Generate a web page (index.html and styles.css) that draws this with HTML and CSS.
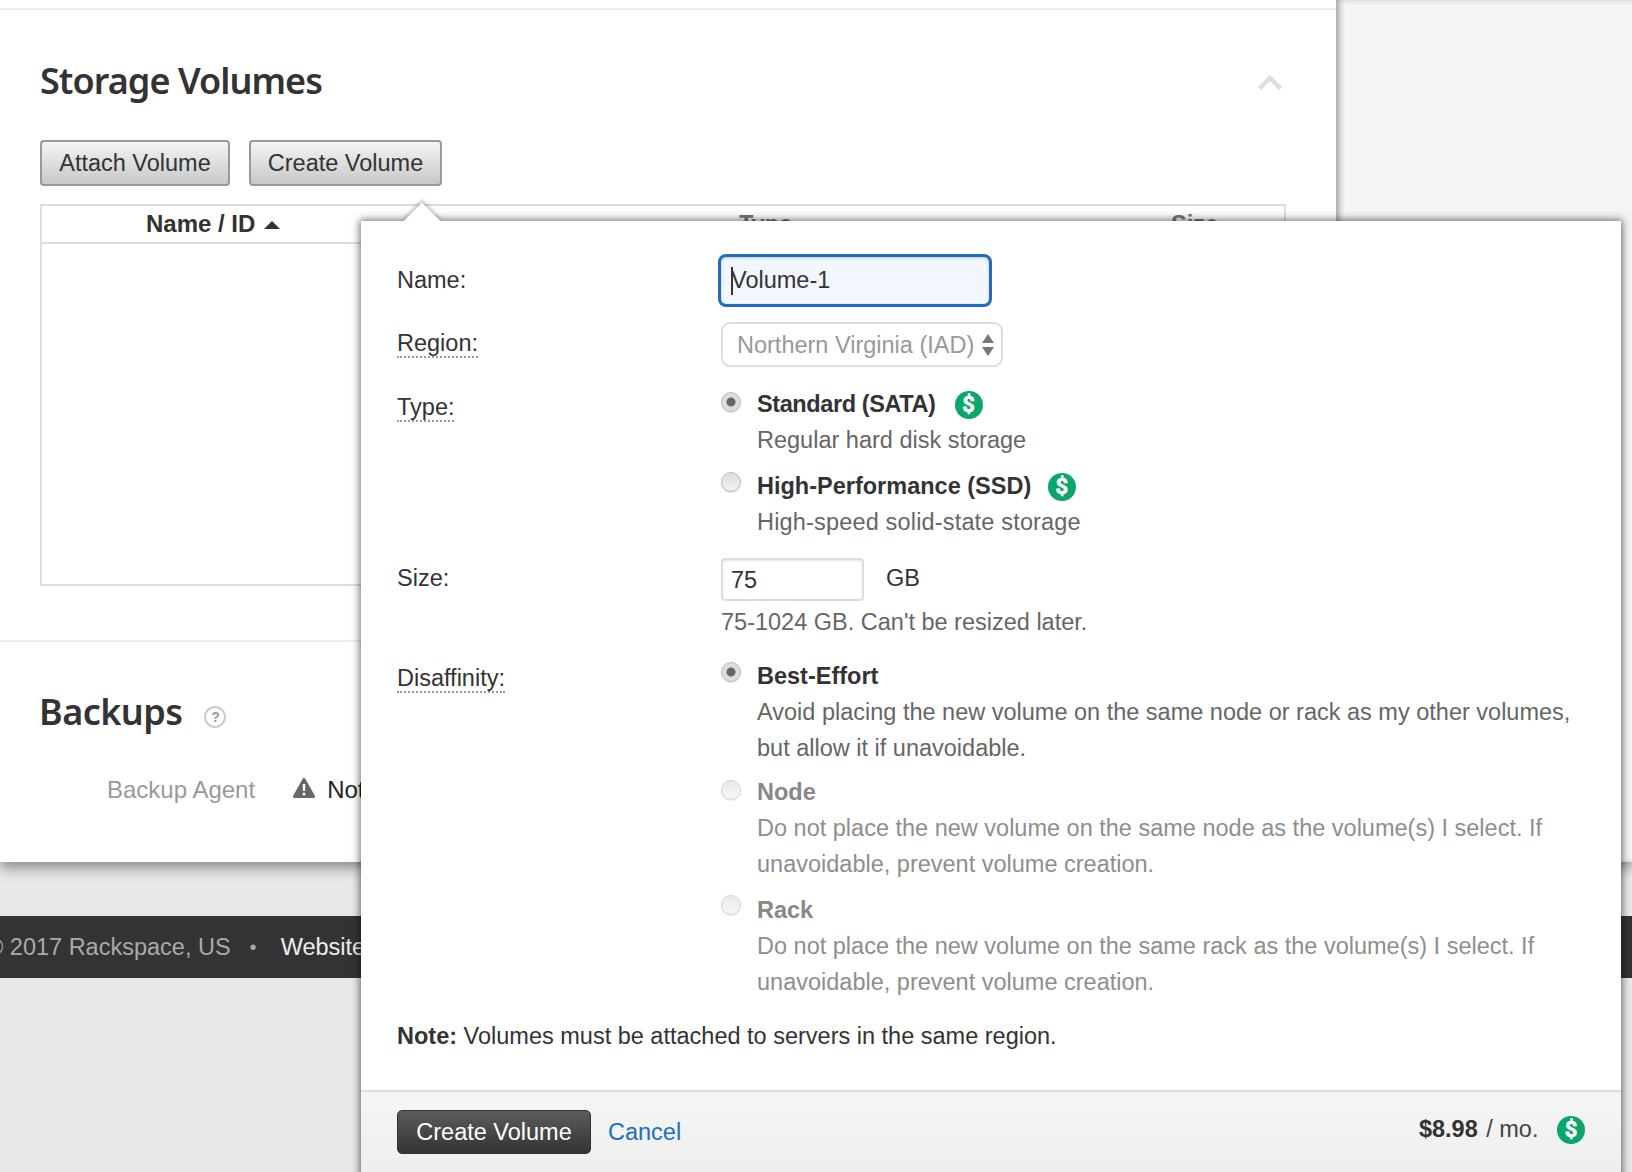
FILE: index.html
```html
<!DOCTYPE html>
<html lang="en">
<head>
  <meta charset="UTF-8" />
  <title>Storage Volumes</title>
  <link rel="stylesheet" href="styles.css">
</head>
<body>
  <div class="main">
    <div class="content">
      <section class="volumes">
        <div class="section-head">
          <h2>Storage Volumes</h2>
          <svg class="collapse" width="24" height="16" viewBox="0 0 24 16"><path d="M1.5 14.5 L12 4 L22.5 14.5" fill="none" stroke="#ddd" stroke-width="4.5"/></svg>
        </div>
        <div class="actions">
          <button class="btn">Attach Volume</button>
          <button class="btn">Create Volume</button>
        </div>
        <div class="table">
          <div class="table-head">
            <div class="col-name">Name / ID <span class="sort-up"></span></div>
            <div class="col-type">Type</div>
            <div class="col-size">Size</div>
          </div>
        </div>
      </section>
      <section class="backups">
        <div class="backups-head">
          <h2>Backups</h2>
          <span class="help">?</span>
        </div>
        <div class="agent">
          <span class="agent-label">Backup Agent</span>
          <svg class="warn" width="22" height="20" viewBox="0 0 22 20"><path d="M11 1.5 L20.5 18.5 L1.5 18.5 Z" fill="#666" stroke="#666" stroke-width="3" stroke-linejoin="round"/><rect x="9.8" y="6" width="2.4" height="7" fill="#fff"/><rect x="9.8" y="14.8" width="2.4" height="2.6" fill="#fff"/></svg>
          <span class="agent-value">Not Installed</span>
        </div>
      </section>
    </div>
    <div class="sidebar"></div>
  </div>

  <div class="site-footer">
    <span class="copyright">© 2017 Rackspace, US</span>
    <span class="dot">•</span>
    <span class="footer-link">Website</span>
  </div>

  <div class="popover">
    <div class="popover-arrow"></div>
    <div class="popover-body">
      <div class="row row-name">
        <div class="label">Name:</div>
        <div class="name-input"><span class="caret"></span>Volume-1</div>
      </div>
      <div class="row row-region">
        <div class="label"><span class="hint-label">Region:</span></div>
        <div class="select">
          <span>Northern Virginia (IAD)</span>
          <svg width="12" height="22" viewBox="0 0 12 22"><path d="M6 0 L12 9 L0 9 Z M0 13 L12 13 L6 22 Z" fill="#777"/></svg>
        </div>
      </div>
      <div class="row row-type">
        <div class="label"><span class="hint-label">Type:</span></div>
        <div class="options">
          <div class="option">
            <span class="radio radio-on"></span>
            <div>
              <div class="option-title">Standard (SATA) <span class="price-icon">$</span></div>
              <div class="option-desc">Regular hard disk storage</div>
            </div>
          </div>
          <div class="option">
            <span class="radio"></span>
            <div>
              <div class="option-title">High-Performance (SSD) <span class="price-icon">$</span></div>
              <div class="option-desc">High-speed solid-state storage</div>
            </div>
          </div>
        </div>
      </div>
      <div class="row row-size">
        <div class="label">Size:</div>
        <div>
          <div class="size-line">
            <div class="size-input">75</div>
            <span class="unit">GB</span>
          </div>
          <div class="size-hint">75-1024 GB. Can't be resized later.</div>
        </div>
      </div>
      <div class="row row-disaffinity">
        <div class="label"><span class="hint-label">Disaffinity:</span></div>
        <div class="options">
          <div class="option option-best">
            <span class="radio radio-on"></span>
            <div>
              <div class="option-title">Best-Effort</div>
              <div class="option-desc">Avoid placing the new volume on the same node or rack as my other volumes,<br>but allow it if unavoidable.</div>
            </div>
          </div>
          <div class="option disabled">
            <span class="radio"></span>
            <div>
              <div class="option-title">Node</div>
              <div class="option-desc">Do not place the new volume on the same node as the volume(s) I select. If<br>unavoidable, prevent volume creation.</div>
            </div>
          </div>
          <div class="option disabled">
            <span class="radio"></span>
            <div>
              <div class="option-title">Rack</div>
              <div class="option-desc">Do not place the new volume on the same rack as the volume(s) I select. If<br>unavoidable, prevent volume creation.</div>
            </div>
          </div>
        </div>
      </div>
      <p class="note"><strong>Note:</strong> Volumes must be attached to servers in the same region.</p>
    </div>
    <div class="popover-foot">
      <button class="btn-dark">Create Volume</button>
      <a class="cancel" href="#">Cancel</a>
      <div class="total"><strong>$8.98</strong> / mo. <span class="price-icon">$</span></div>
    </div>
  </div>
</body>
</html>
```

FILE: styles.css
```css
html, body {
  margin: 0;
  height: 1172px;
  overflow: hidden;
}
body {
  position: relative;
  font-family: "Liberation Sans", Arial, sans-serif;
  font-size: 23.5px;
  line-height: 36px;
  color: #333;
  background: #e8e8e8;
}
h2 {
  margin: 0 0 0 -1px;
  font-family: "Noto Sans", sans-serif;
  font-size: 36px;
  line-height: 48px;
  font-weight: 600;
  letter-spacing: -0.55px;
  color: #333;
}

/* Page behind the popover */
.main {
  display: flex;
  height: 862px;
  box-shadow: 0 6px 12px rgba(0,0,0,0.4);
}
.content {
  width: 1336px;
  background: #fff;
  padding-top: 8px;
  box-sizing: border-box;
}
.sidebar {
  flex: 1;
  background: #f4f4f4;
  box-shadow: inset 5px 0 6px -2px rgba(0,0,0,0.35);
}
.volumes {
  border-top: 2px solid #eee;
  border-bottom: 2px solid #eee;
  height: 634px;
  padding: 47px 50px 0 40px;
  box-sizing: border-box;
}
.volumes h2 {
  margin-left: 0;
  letter-spacing: -0.95px;
}
.section-head {
  display: flex;
  justify-content: space-between;
  align-items: center;
}
.collapse {
  margin: 2px 4px 0 0;
}
.actions {
  display: flex;
  gap: 19px;
  margin-top: 35px;
}
.btn {
  width: 190px;
  height: 46px;
  padding: 0;
  font: inherit;
  color: #333;
  border: 2px solid #999;
  border-radius: 4px;
  background: linear-gradient(#f4f4f4, #c8c8c8);
}
.btn + .btn {
  width: 193px;
}
.table {
  margin-top: 18px;
  height: 382px;
  border: 2px solid #ddd;
  box-sizing: border-box;
}
.table-head {
  display: flex;
  height: 36px;
  border-bottom: 2px solid #ddd;
  font-weight: 700;
  line-height: 36px;
}
.col-name {
  width: 400px;
  padding-left: 104px;
  box-sizing: border-box;
  font-size: 24px;
}
.col-type {
  margin-left: 297px;
  color: #777;
}
.col-size {
  margin-left: 379px;
  color: #777;
}
.sort-up {
  display: inline-block;
  margin: 0 0 3px 2px;
  border-left: 8px solid transparent;
  border-right: 8px solid transparent;
  border-bottom: 8px solid #333;
}
.backups {
  padding: 46px 40px 0;
}
.backups-head {
  display: flex;
  align-items: center;
  gap: 22px;
}
.help {
  width: 18px;
  height: 18px;
  margin-top: 10px;
  border: 2px solid #ccc;
  border-radius: 50%;
  font-size: 14px;
  line-height: 18px;
  font-weight: 700;
  text-align: center;
  color: #999;
}
.agent {
  display: flex;
  align-items: center;
  margin-top: 36px;
  padding-left: 67px;
  font-size: 24px;
}
.agent-label {
  color: #999;
}
.warn {
  margin: -4px 12px 0 38px;
}
.agent-value {
  color: #222;
  white-space: nowrap;
}
.site-footer {
  display: flex;
  align-items: center;
  height: 62px;
  margin-top: 54px;
  background: #333;
  color: #aaa;
  white-space: nowrap;
}
.copyright {
  margin-left: -14px;
}
.dot {
  margin: 0 24px 0 19px;
  font-size: 20px;
}
.footer-link {
  color: #eee;
}

/* Create volume popover */
.popover {
  position: absolute;
  left: 361px;
  top: 221px;
  width: 1260px;
  height: 960px;
  background: #fff;
  box-shadow: 0 0 8px 1px rgba(0,0,0,0.6);
}
.popover-arrow {
  position: absolute;
  left: 48px;
  top: -13px;
  width: 26px;
  height: 26px;
  background: #fff;
  transform: rotate(45deg);
  box-shadow: -2px -2px 4px rgba(0,0,0,0.25);
}
.popover-body {
  position: relative;
  height: 869px;
  padding: 33px 0 0 36px;
  box-sizing: border-box;
  background: #fff;
}
.row {
  display: grid;
  grid-template-columns: 324px 1fr;
}
.label {
  color: #333;
}
.hint-label {
  border-bottom: 2px dotted #999;
}
.row-name .label {
  padding-top: 8px;
}
.name-input {
  width: 274px;
  height: 53px;
  margin-left: -3px;
  padding-left: 10px;
  box-sizing: border-box;
  border: 3px solid #1f6cc2;
  border-radius: 8px;
  background: #f2f6fe;
  box-shadow: inset 0 1px 3px rgba(0,0,0,0.2);
  line-height: 46px;
}
.caret {
  display: inline-block;
  width: 2px;
  height: 28px;
  margin-right: -2px;
  vertical-align: -7px;
  background: #333;
}
.row-region {
  margin-top: 15px;
}
.row-region .label {
  padding-top: 3px;
}
.select {
  display: flex;
  align-items: center;
  justify-content: space-between;
  width: 282px;
  height: 45px;
  padding: 0 7px 0 14px;
  box-sizing: border-box;
  border: 2px solid #ddd;
  border-radius: 9px;
  color: #999;
  white-space: nowrap;
}
.row-type {
  margin-top: 19px;
}
.row-type .label {
  padding-top: 3px;
}
.row-type .option:first-child .option-title {
  letter-spacing: -0.4px;
}
.row-type .option:first-child .price-icon {
  margin-left: 13px;
}
.row-type .option:last-child .option-desc {
  letter-spacing: 0.17px;
}
.options {
  display: flex;
  flex-direction: column;
  gap: 10px;
}
.option {
  display: flex;
  gap: 16px;
}
.radio {
  flex: none;
  width: 20px;
  height: 20px;
  margin-top: 4px;
  box-sizing: border-box;
  border: 1px solid #bbb;
  border-radius: 50%;
  background: linear-gradient(#ddd, #f2f2f2);
  box-shadow: 0 1px 1px rgba(0,0,0,0.15);
}
.row-type .option:first-child .radio,
.disabled .radio {
  margin-top: 6px;
}
.disabled + .disabled .radio {
  margin-top: 3px;
}
.radio-on {
  background: radial-gradient(circle, #666 0 4px, #ddd 5px);
}
.disabled .radio {
  opacity: 0.6;
}
.option-best {
  margin-bottom: -2px;
}
.option-title {
  height: 36px;
  font-weight: 700;
  color: #333;
}
.option-desc {
  color: #666;
}
.disabled .option-title {
  color: #888;
}
.disabled .option-desc {
  color: #8e8e8e;
}
.price-icon {
  display: inline-block;
  width: 28px;
  height: 28px;
  margin-left: 10px;
  border-radius: 50%;
  background: #0aa66b;
  color: #fff;
  font-family: Roboto, sans-serif;
  font-size: 22px;
  font-weight: 700;
  letter-spacing: 0;
  line-height: 28px;
  text-align: center;
  -webkit-text-stroke: 0.6px #fff;
}
.row-size {
  margin-top: 18px;
}
.row-size .label {
  padding-top: 2px;
}
.size-line {
  display: flex;
  align-items: flex-start;
  gap: 22px;
}
.size-input {
  width: 143px;
  height: 43px;
  padding-left: 8px;
  box-sizing: border-box;
  border: 2px solid #ddd;
  border-radius: 4px;
  line-height: 41px;
  color: #333;
  box-shadow: inset 0 1px 2px rgba(0,0,0,0.1);
}
.unit {
  margin-top: 2px;
  color: #333;
}
.size-hint {
  margin-top: 3px;
  color: #666;
}
.row-disaffinity {
  margin-top: 18px;
}
.row-disaffinity .label {
  padding-top: 2px;
}
.note {
  margin: 18px 0 0;
}
.popover-foot {
  display: flex;
  align-items: center;
  height: 91px;
  padding: 0 36px;
  border-top: 2px solid #ddd;
  background: linear-gradient(#f5f5f5, #eee);
  box-sizing: border-box;
}
.btn-dark {
  width: 194px;
  height: 44px;
  margin-top: -9px;
  padding: 0;
  font: inherit;
  color: #fff;
  border: 1px solid #333;
  border-radius: 5px;
  background: linear-gradient(#5c5c5c, #333);
}
.cancel {
  margin: -9px 0 0 17px;
  color: #1a6fc4;
  text-decoration: none;
}
.total {
  margin: -16px 0 0 auto;
  color: #444;
}
.total strong {
  margin-right: 2px;
  color: #333;
}
.total .price-icon {
  margin-left: 12px;
}
```
